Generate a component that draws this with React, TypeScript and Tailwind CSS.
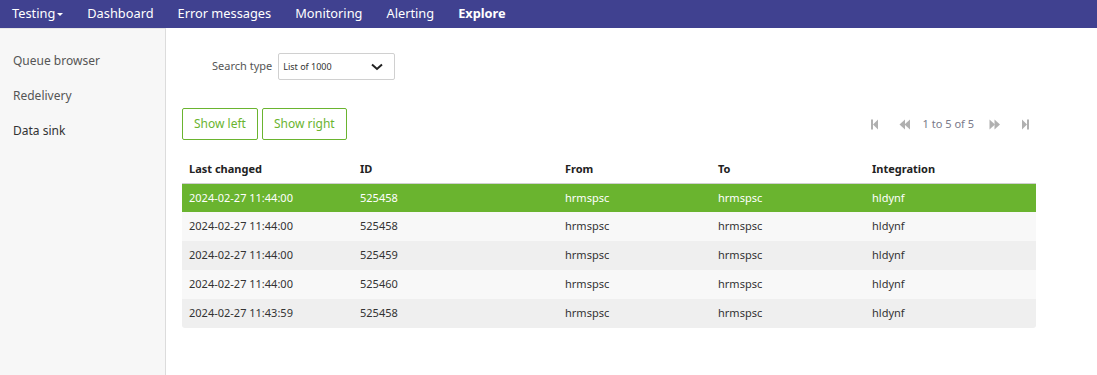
const nav = ['Dashboard', 'Error messages', 'Monitoring', 'Alerting']

const sideItems = [
  { label: 'Queue browser', active: false },
  { label: 'Redelivery', active: false },
  { label: 'Data sink', active: true },
]

const rows = [
  { changed: '2024-02-27 11:44:00', id: '525458', from: 'hrmspsc', to: 'hrmspsc', integration: 'hldynf' },
  { changed: '2024-02-27 11:44:00', id: '525458', from: 'hrmspsc', to: 'hrmspsc', integration: 'hldynf' },
  { changed: '2024-02-27 11:44:00', id: '525459', from: 'hrmspsc', to: 'hrmspsc', integration: 'hldynf' },
  { changed: '2024-02-27 11:44:00', id: '525460', from: 'hrmspsc', to: 'hrmspsc', integration: 'hldynf' },
  { changed: '2024-02-27 11:43:59', id: '525458', from: 'hrmspsc', to: 'hrmspsc', integration: 'hldynf' },
]

function PagerIcon({ kind }: { kind: 'first' | 'prev' | 'next' | 'last' }) {
  return (
    <svg width="12" height="11" viewBox="0 0 12 11" className="fill-[#b0b0b0]">
      {kind === 'first' && (
        <>
          <rect x="2" y="0.5" width="2" height="10" />
          <path d="M4 5.5 L9 0.5 V10.5 Z" />
        </>
      )}
      {kind === 'prev' && (
        <>
          <path d="M0.5 5.5 L6 0.5 V10.5 Z" />
          <path d="M5.5 5.5 L11 0.5 V10.5 Z" />
        </>
      )}
      {kind === 'next' && (
        <>
          <path d="M0.5 0.5 L6 5.5 L0.5 10.5 Z" />
          <path d="M5.5 0.5 L11 5.5 L5.5 10.5 Z" />
        </>
      )}
      {kind === 'last' && (
        <>
          <path d="M3 0.5 L8 5.5 L3 10.5 Z" />
          <rect x="8" y="0.5" width="2" height="10" />
        </>
      )}
    </svg>
  )
}

export default function App() {
  return (
    <div className="flex flex-col h-[375px] w-[1097px] bg-white font-['Noto_Sans',sans-serif] overflow-hidden">
      {/* top bar */}
      <header className="h-[28px] bg-[#404190] flex items-center text-white text-[12.8px] shrink-0">
        <span className="pl-[12px] pr-[24px] flex items-center">
          Testing
          <span className="ml-[2px] w-0 h-0 border-l-[3px] border-r-[3px] border-t-[3px] border-l-transparent border-r-transparent border-t-white" />
        </span>
        {nav.map(n => (
          <span key={n} className="pr-[24px]">{n}</span>
        ))}
        <span className="font-bold">Explore</span>
      </header>

      <div className="flex flex-1">
        {/* sidebar */}
        <aside className="w-[166px] shrink-0 bg-[#f7f7f7] border-r border-[#dcdcdc] border-t border-t-[#e6e6e6] pt-[24px] flex flex-col gap-[19px]">
          {sideItems.map(s => (
            <span
              key={s.label}
              className={`pl-[13px] text-[12px] leading-[16px] ${s.active ? 'text-[#333]' : 'text-[#555]'}`}
            >
              {s.label}
            </span>
          ))}
        </aside>

        {/* main */}
        <main className="flex-1 pl-[16px] pr-[61px] pt-[25px]">
          <div className="flex items-center gap-[6px] pl-[30px]">
            <span className="text-[11px] text-[#555]">Search type</span>
            <div className="w-[117px] h-[27px] border border-[#d0d0d0] rounded-[2px] flex items-center justify-between pl-[4px] pr-[11px]">
              <span className="text-[9px] text-[#333]">List of 1000</span>
              <svg width="12" height="8" viewBox="0 0 12 8" fill="none" stroke="#222" strokeWidth="2">
                <path d="M1 1.5 L6 6 L11 1.5" />
              </svg>
            </div>
          </div>

          <div className="flex items-center justify-between mt-[28px]">
            <div className="flex gap-[4px]">
              <button className="h-[32px] px-[11px] border border-[#6ab42f] rounded-[2px] text-[12px] text-[#6ab42f] bg-white">
                Show left
              </button>
              <button className="h-[32px] px-[11px] border border-[#6ab42f] rounded-[2px] text-[12px] text-[#6ab42f] bg-white">
                Show right
              </button>
            </div>
            <div className="flex items-center text-[11px] text-[#7a7a8a] pr-[5px]">
              <PagerIcon kind="first" />
              <span className="w-[18px]" />
              <PagerIcon kind="prev" />
              <span className="pl-[12px] pr-[15px]">1 to 5 of 5</span>
              <PagerIcon kind="next" />
              <span className="w-[18px]" />
              <PagerIcon kind="last" />
            </div>
          </div>

          <div className="mt-[15px] text-[11px]">
            <div className="grid grid-cols-[171px_205px_153px_154px_1fr] h-[29px] items-center border-b border-[#cfcfcf] font-bold text-[#222] px-[7px]">
              <span>Last changed</span>
              <span>ID</span>
              <span>From</span>
              <span>To</span>
              <span>Integration</span>
            </div>
            {rows.map((r, i) => (
              <div
                key={i}
                className={`grid grid-cols-[171px_205px_153px_154px_1fr] items-center px-[7px] ${
                  i === 0
                    ? 'h-[28px] bg-[#6ab42f] text-white'
                    : i % 2 === 1
                      ? 'h-[29px] bg-[#f8f8f8] text-[#333]'
                      : 'h-[29px] bg-[#efefef] text-[#333]'
                } ${i === rows.length - 1 ? 'rounded-b-[3px]' : ''}`}
              >
                <span>{r.changed}</span>
                <span>{r.id}</span>
                <span>{r.from}</span>
                <span>{r.to}</span>
                <span>{r.integration}</span>
              </div>
            ))}
          </div>
        </main>
      </div>
    </div>
  )
}
